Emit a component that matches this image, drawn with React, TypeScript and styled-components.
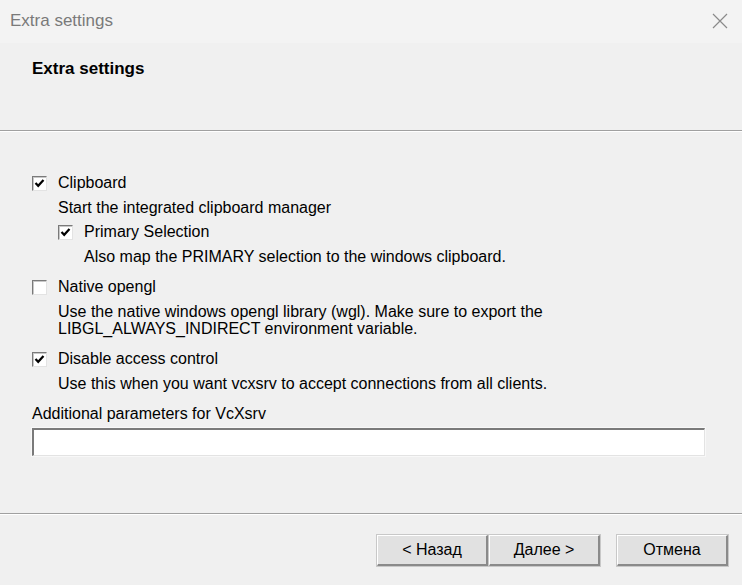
import React from "react";
import styled, { createGlobalStyle } from "styled-components";

const GlobalStyle = createGlobalStyle`
  html, body {
    margin: 0;
    padding: 0;
    background: #f0f0f0;
  }
  * {
    box-sizing: border-box;
  }
`;

interface OptionProps {
  label: string;
  checked: boolean;
  nested?: boolean;
  lines: string[];
}

const Option = ({ label, checked, nested, lines }: OptionProps) => (
  <OptionWrapper nested={nested}>
    <CheckRow>
      <CheckBox>{checked && <CheckMark />}</CheckBox>
      <CheckLabel>{label}</CheckLabel>
    </CheckRow>
    <Description>
      {lines.map((line) => (
        <DescLine key={line}>{line}</DescLine>
      ))}
    </Description>
  </OptionWrapper>
);

const CheckMark = () => (
  <svg width="11" height="11" viewBox="0 0 11 11">
    <path d="M1.5 5 L4.2 7.8 L9.5 2" fill="none" stroke="#000" strokeWidth="2.2" />
  </svg>
);

const App = () => (
  <>
    <GlobalStyle />
    <Window>
      <TitleBar>
        <TitleText>Extra settings</TitleText>
        <CloseButton>
          <svg width="16" height="16" viewBox="0 0 16 16">
            <path d="M1 1 L15 15 M15 1 L1 15" stroke="#8a8a8a" strokeWidth="1.2" />
          </svg>
        </CloseButton>
      </TitleBar>
      <Header>
        <HeaderTitle>Extra settings</HeaderTitle>
      </Header>
      <Separator />
      <Content>
        <Option
          label="Clipboard"
          checked
          lines={["Start the integrated clipboard manager"]}
        />
        <Option
          label="Primary Selection"
          checked
          nested
          lines={["Also map the PRIMARY selection to the windows clipboard."]}
        />
        <Option
          label="Native opengl"
          checked={false}
          lines={[
            "Use the native windows opengl library (wgl). Make sure to export the",
            "LIBGL_ALWAYS_INDIRECT environment variable.",
          ]}
        />
        <Option
          label="Disable access control"
          checked
          lines={["Use this when you want vcxsrv to accept connections from all clients."]}
        />
        <FieldLabel>Additional parameters for VcXsrv</FieldLabel>
        <TextInput />
      </Content>
      <Separator />
      <Footer>
        <ButtonPair>
          <Button>&lt; Назад</Button>
          <Button>Далее &gt;</Button>
        </ButtonPair>
        <Button>Отмена</Button>
      </Footer>
    </Window>
  </>
);

export default App;

const Window = styled.div`
  width: 742px;
  height: 585px;
  display: flex;
  flex-direction: column;
  background: #f0f0f0;
  font-family: "Liberation Sans", Arial, sans-serif;
  font-size: 16px;
  color: #000;
  overflow: hidden;
`;

const TitleBar = styled.div`
  height: 43px;
  flex-shrink: 0;
  display: flex;
  align-items: center;
  justify-content: space-between;
  padding: 0 14px 2px 10px;
  background: #f3f3f3;
`;

const TitleText = styled.span`
  font-size: 17px;
  color: #7a7a7a;
`;

const CloseButton = styled.div`
  display: flex;
  align-items: center;
`;

const Header = styled.div`
  height: 87px;
  flex-shrink: 0;
  padding: 16px 32px 0;
`;

const HeaderTitle = styled.h1`
  margin: 0;
  font-size: 17px;
  font-weight: bold;
`;

const Separator = styled.div`
  height: 2px;
  flex-shrink: 0;
  border-top: 1px solid #a0a0a0;
  border-bottom: 1px solid #ffffff;
`;

const Content = styled.div`
  flex: 1;
  display: flex;
  flex-direction: column;
  padding: 42px 37px 0 32px;
`;

const OptionWrapper = styled.div<{ nested?: boolean }>`
  display: flex;
  flex-direction: column;
  margin-left: ${({ nested }) => (nested ? "26px" : "0")};
  margin-top: ${({ nested }) => (nested ? "-6px" : "0")};
  margin-bottom: 13px;
`;

const CheckRow = styled.div`
  display: flex;
  align-items: center;
  gap: 11px;
  height: 18px;
`;

const CheckBox = styled.div`
  width: 15px;
  height: 15px;
  display: flex;
  align-items: center;
  justify-content: center;
  background: #fff;
  border-top: 1px solid #7a7a7a;
  border-left: 1px solid #7a7a7a;
  border-right: 1px solid #e3e3e3;
  border-bottom: 1px solid #e3e3e3;
  box-shadow: inset 1px 1px 0 #c8c8c8;
`;

const CheckLabel = styled.span`
  line-height: 18px;
`;

const Description = styled.div`
  display: flex;
  flex-direction: column;
  margin-left: 26px;
  margin-top: 7px;
`;

const DescLine = styled.span`
  line-height: 17px;
`;

const FieldLabel = styled.div`
  line-height: 18px;
`;

const TextInput = styled.div`
  margin-top: 5px;
  height: 28px;
  background: #fff;
  border-top: 2px solid #7a7a7a;
  border-left: 2px solid #7a7a7a;
  border-right: 1px solid #e3e3e3;
  border-bottom: 1px solid #e3e3e3;
  box-shadow: 0 0 0 1px #f8f8f8;
`;

const Footer = styled.div`
  height: 70px;
  flex-shrink: 0;
  display: flex;
  justify-content: flex-end;
  align-items: flex-start;
  gap: 17px;
  padding: 20px 14px 0 0;
`;

const ButtonPair = styled.div`
  display: flex;
  gap: 1px;
`;

const Button = styled.button`
  width: 111px;
  height: 31px;
  font-family: "Liberation Sans", Arial, sans-serif;
  font-size: 16px;
  color: #000;
  background: #e1e1e1;
  border-top: 1px solid #fff;
  border-left: 1px solid #fff;
  border-right: 2px solid #8a8a8a;
  border-bottom: 2px solid #8a8a8a;
  box-shadow: 0 0 0 1px #c8c8c8;
  padding: 0;
`;
